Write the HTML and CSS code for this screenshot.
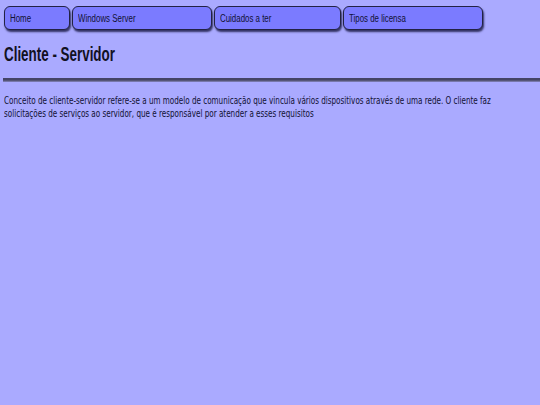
FILE: index.html
```html
<!DOCTYPE html>
<html lang="pt">
<head>
<meta charset="utf-8">
<title>Cliente - Servidor</title>
<link rel="stylesheet" href="styles.css">
</head>
<body>
<nav class="menu">
  <a class="tab tab-home" href="#"><span class="tab-label">Home</span></a>
  <a class="tab tab-wide" href="#"><span class="tab-label">Windows Server</span></a>
  <a class="tab tab-mid" href="#"><span class="tab-label">Cuidados a ter</span></a>
  <a class="tab tab-wide" href="#"><span class="tab-label">Tipos de licensa</span></a>
</nav>
<main class="content">
  <h1 class="title">Cliente - Servidor</h1>
  <hr class="rule">
  <p class="text">Conceito de cliente-servidor refere-se a um modelo de comunicação que vincula vários dispositivos através de uma rede. O cliente faz solicitações de serviços ao servidor, que é responsável por atender a esses requisitos</p>
</main>
</body>
</html>
```
FILE: styles.css
```css
html, body {
  margin: 0;
  padding: 0;
  background: #aaaaff;
  overflow: hidden;
}
body {
  padding: 6px 0 0 3px;
}
.menu {
  display: flex;
  gap: 2px;
  padding-left: 1px;
}
.tab {
  box-sizing: border-box;
  height: 24px;
  display: flex;
  align-items: center;
  padding-left: 5px;
  background: #7b7bff;
  border: 1px solid #222244;
  border-radius: 6px;
  box-shadow: 1px 2px 2px rgba(20, 20, 60, 0.8);
  font-family: "Liberation Sans", Arial, sans-serif;
  font-size: 10px;
  color: #111133;
  text-decoration: none;
  white-space: nowrap;
}
.tab-label {
  display: inline-block;
  transform: scaleX(0.79);
  transform-origin: 0 50%;
}
.tab-home { width: 66px; }
.tab-wide { width: 140px; }
.tab-mid { width: 127px; }
.content {
  overflow: hidden;
}
.title {
  margin: 13px 0 0 1px;
  font-family: "Liberation Sans", Arial, sans-serif;
  font-size: 20px;
  font-weight: bold;
  color: #111122;
  transform: scaleX(0.67);
  transform-origin: 0 0;
  white-space: nowrap;
}
.rule {
  margin: 12px 0 0 0;
  height: 1px;
  border: 0;
  border-top: 2px solid #444466;
  border-bottom: 1px solid #7777aa;
  background: #555577;
}
.text {
  margin: 12px 0 0 1px;
  width: 795px;
  font-family: "DejaVu Sans", Verdana, sans-serif;
  font-size: 11px;
  line-height: 13px;
  color: #111133;
  transform: scaleX(0.655);
  transform-origin: 0 0;
}
```
